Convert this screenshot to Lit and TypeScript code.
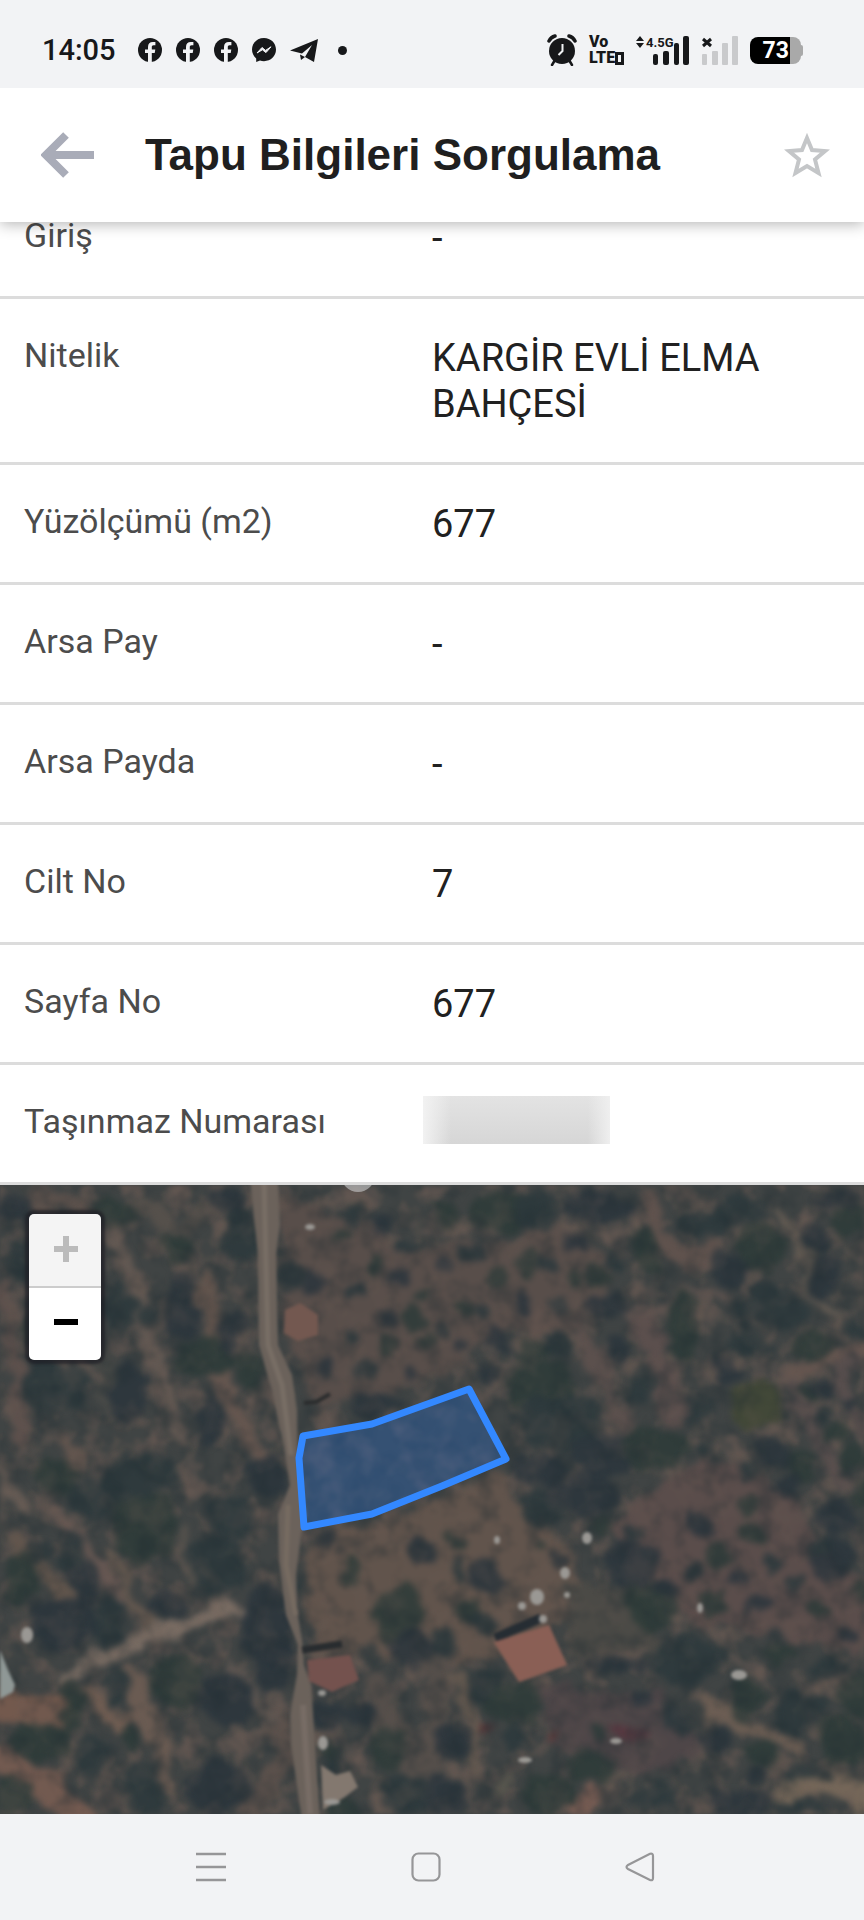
import { LitElement, html, svg, css } from "lit";
import { customElement, property } from "lit/decorators.js";

type Blob = [number, number, number, number];
type Patch = { d: string; fill: string };
type Strip = { d: string; w: number; c: string };

const SOIL: Patch[] = [
  { d: "M632 320L700 275L745 280L770 300L800 315L815 350L864 400V475L790 455L700 440L640 400L610 350Z", fill: "#5a4d4b" },
  { d: "M315 345L375 335L500 290L530 330L570 360L590 420L540 450L460 480L320 470L300 400Z", fill: "#61544c" },
  { d: "M280 5L350 30L400 60L480 60L560 40L610 70L600 130L520 140L440 190L320 225L285 140Z", fill: "#584e4a" },
  { d: "M560 400L640 400L660 460L570 470Z", fill: "#4b4a46" },
  { d: "M545 500L670 510L700 570L640 590L550 560Z", fill: "#4e4648" },
];

const STRIPS: Strip[] = [
  { d: "M117 55L133 95L147 145L163 195L180 255", w: 15, c: "#625852" },
  { d: "M207 95L217 152", w: 20, c: "#60534c" },
  { d: "M220 195L240 240L262 272", w: 15, c: "#65564f" },
  { d: "M5 105L18 200L22 255", w: 15, c: "#5c504c" },
  { d: "M0 285L23 325", w: 10, c: "#665b54" },
  { d: "M40 14L83 22", w: 18, c: "#5a504b" },
  { d: "M143 20L180 48L200 30", w: 16, c: "#55504b" },
  { d: "M60 258L76 270L74 285", w: 11, c: "#62554e" },
  { d: "M100 160L110 230", w: 9, c: "#4a4b48" },
  { d: "M649 12L665 55L685 78L714 65", w: 17, c: "#5f524d" },
  { d: "M639 128L655 162L665 195L679 232", w: 22, c: "#5b4f4d" },
  { d: "M582 142L605 195L629 250", w: 14, c: "#5b504d" },
  { d: "M515 138L572 138", w: 18, c: "#5f524d" },
  { d: "M611 122L659 125L685 108L732 118", w: 9, c: "#5e534f" },
  { d: "M779 25L802 62L809 105L835 135", w: 9, c: "#625a52" },
  { d: "M799 188L832 172L864 162", w: 14, c: "#64554f" },
  { d: "M795 202L809 242L845 295", w: 13, c: "#574e4d" },
  { d: "M850 175L840 205L864 240", w: 14, c: "#574e4d" },
  { d: "M0 522L60 528", w: 26, c: "#73594d" },
  { d: "M0 575L33 592L80 632", w: 26, c: "#735a50" },
  { d: "M63 500L95 515L115 540L140 532", w: 14, c: "#705d52" },
  { d: "M133 488L143 522L160 555L167 602", w: 17, c: "#6a5b52" },
  { d: "M57 325L87 365L120 412", w: 12, c: "#665752" },
  { d: "M113 372L130 400L147 440", w: 13, c: "#64584f" },
  { d: "M13 355L40 382L77 422", w: 17, c: "#61554c" },
  { d: "M230 482L250 498L267 528", w: 10, c: "#615853" },
  { d: "M190 345L188 400", w: 9, c: "#54514c" },
  { d: "M250 625L292 570L280 540", w: 22, c: "#5a504b" },
  { d: "M375 500L395 560L430 600L440 480", w: 26, c: "#544e4a" },
  { d: "M705 522L735 535L795 562", w: 16, c: "#6b5d53" },
  { d: "M792 602L830 594L864 612", w: 28, c: "#756759" },
  { d: "M574 622L594 612", w: 18, c: "#7b5e54" },
  { d: "M459 495L470 535L475 582", w: 15, c: "#61574e" },
  { d: "M510 590L500 610", w: 12, c: "#55554d" },
  { d: "M63 492L100 475L150 452L200 435L222 424L242 428", w: 14, c: "#786b62" },
];

const TREES: Blob[] = [
  [117, 122, 20, 25], [180, 122, 20, 32], [177, 65, 16, 14], [240, 50, 17, 28], [230, 145, 15, 20],
  [205, 172, 30, 20], [55, 200, 36, 28], [127, 205, 20, 32], [247, 185, 14, 24], [140, 290, 40, 24],
  [266, 288, 20, 20], [55, 290, 20, 18], [93, 312, 26, 22], [15, 22, 18, 14], [110, 25, 22, 16],
  [35, 75, 30, 26], [210, 235, 12, 26], [40, 140, 18, 24], [147, 130, 8, 9], [225, 15, 22, 12],
  [143, 342, 34, 32], [217, 382, 28, 30], [267, 440, 26, 40], [173, 495, 27, 27], [117, 502, 14, 20],
  [227, 515, 28, 30], [40, 555, 34, 18], [110, 438, 20, 24], [63, 438, 36, 28], [13, 608, 20, 18],
  [143, 605, 20, 26], [217, 600, 34, 28], [387, 562, 20, 20], [407, 608, 27, 22], [330, 528, 19, 15],
  [20, 395, 15, 26], [70, 365, 13, 20], [167, 422, 22, 12], [130, 555, 14, 12], [230, 330, 24, 22],
  [85, 400, 14, 20], [70, 520, 12, 26], [90, 575, 18, 22], [275, 480, 18, 26], [345, 628, 20, 12],
  [38, 370, 10, 9], [362, 530, 16, 14], [328, 562, 8, 7], [330, 578, 8, 9],
  [326, 353, 15, 9], [353, 385, 9, 19], [301, 402, 7, 12], [420, 365, 12, 14], [397, 428, 26, 27],
  [371, 468, 12, 14], [412, 462, 20, 18], [452, 355, 9, 8], [459, 385, 6, 10], [485, 392, 17, 20],
  [469, 428, 10, 11], [442, 458, 13, 17], [559, 372, 8, 7], [539, 362, 6, 6], [484, 435, 14, 10],
  [628, 378, 26, 26], [652, 422, 26, 26], [682, 475, 42, 24], [618, 482, 30, 10], [515, 515, 30, 22],
  [482, 498, 16, 16], [452, 556, 19, 19], [548, 608, 26, 20], [799, 528, 26, 24], [832, 375, 22, 24],
  [590, 580, 26, 18], [545, 325, 24, 18], [585, 310, 36, 22], [744, 512, 16, 20], [682, 530, 20, 18],
  [715, 555, 20, 14], [762, 570, 15, 12], [808, 585, 22, 8], [740, 615, 30, 14], [842, 555, 26, 24],
  [655, 612, 24, 14], [445, 612, 20, 20], [855, 510, 22, 18], [800, 620, 28, 8], [752, 590, 10, 8],
  [600, 545, 10, 7], [515, 548, 10, 18], [640, 512, 12, 8], [780, 465, 14, 12], [830, 480, 22, 8],
  [699, 340, 14, 13], [752, 348, 11, 12], [635, 345, 11, 10], [652, 372, 9, 8], [717, 367, 13, 12],
  [692, 385, 11, 11], [736, 392, 13, 11], [716, 416, 14, 14], [792, 395, 10, 10], [758, 419, 11, 11],
  [816, 425, 12, 10], [771, 377, 8, 8], [846, 448, 9, 10], [746, 320, 12, 10], [819, 362, 10, 10],
  [836, 332, 18, 18], [604, 342, 10, 10], [776, 450, 12, 7], [664, 402, 10, 8], [857, 408, 10, 10],
  [356, 108, 10, 9], [388, 130, 10, 11], [412, 132, 10, 14], [366, 187, 11, 10], [407, 188, 8, 8],
  [343, 50, 9, 8], [330, 26, 9, 8], [327, 182, 9, 12], [393, 158, 9, 10], [290, 90, 12, 16],
  [313, 95, 11, 14], [425, 110, 9, 8], [352, 30, 10, 8], [380, 40, 11, 11], [374, 80, 9, 10],
  [405, 62, 10, 9], [400, 90, 10, 8], [425, 160, 8, 9], [350, 150, 8, 8], [375, 218, 26, 12],
  [445, 28, 10, 12], [472, 68, 10, 8], [442, 82, 12, 10], [528, 78, 14, 12], [557, 115, 11, 9],
  [525, 118, 11, 10], [595, 90, 11, 11], [615, 75, 11, 11], [495, 152, 12, 12], [532, 162, 16, 16],
  [558, 160, 14, 14], [489, 186, 12, 9], [462, 120, 10, 10], [440, 145, 10, 9], [460, 160, 9, 9],
  [495, 95, 10, 10], [550, 80, 9, 9], [575, 60, 11, 9], [570, 92, 9, 9], [480, 125, 8, 8],
  [605, 122, 20, 14], [682, 140, 16, 32], [640, 200, 12, 24], [615, 165, 12, 16], [540, 200, 34, 24],
  [560, 235, 44, 28], [605, 270, 34, 24], [655, 262, 34, 22], [697, 226, 16, 16], [540, 285, 26, 18],
  [500, 25, 34, 20], [540, 25, 26, 20], [600, 20, 34, 16], [645, 65, 14, 26], [700, 38, 26, 14],
  [727, 85, 20, 18], [760, 60, 26, 24], [770, 120, 34, 22], [825, 90, 18, 22], [812, 160, 20, 14],
  [740, 25, 26, 16], [815, 50, 12, 14], [850, 30, 16, 20], [852, 145, 14, 10], [835, 15, 22, 10],
  [807, 206, 11, 9], [820, 230, 11, 9], [772, 265, 18, 14], [800, 280, 18, 18], [750, 285, 10, 9],
  [850, 218, 10, 8], [835, 250, 14, 10], [745, 155, 16, 14], [725, 185, 16, 14], [855, 270, 12, 12],
  [760, 165, 14, 8], [785, 300, 12, 12], [861, 310, 10, 10], [700, 262, 9, 9], [820, 202, 12, 9],
];

const BRIGHT: Blob[] = [
  [587, 353, 5, 6], [565, 388, 5, 6], [537, 412, 7, 8], [522, 421, 4, 4], [567, 410, 3, 3],
  [739, 490, 8, 5], [616, 556, 6, 3], [27, 450, 6, 8], [323, 558, 5, 7], [543, 434, 4, 4],
  [497, 355, 3, 4], [322, 508, 4, 3], [700, 423, 3, 5], [310, 42, 5, 3], [525, 575, 7, 3],
  [332, 617, 8, 3],
];

const ROWS: [string, string | null][] = [
  ["Giriş", "-"],
  ["Nitelik", "KARGİR EVLİ ELMA BAHÇESİ"],
  ["Yüzölçümü (m2)", "677"],
  ["Arsa Pay", "-"],
  ["Arsa Payda", "-"],
  ["Cilt No", "7"],
  ["Sayfa No", "677"],
  ["Taşınmaz Numarası", null],
];

@customElement("status-bar")
export class StatusBar extends LitElement {
  static styles = css`
    :host { display: block; position: relative; z-index: 3; background: #f2f3f5; color: #17181a; font-family: Roboto, sans-serif; }
    .bar { display: flex; align-items: center; justify-content: space-between; height: 88px; padding: 12px 61px 0 42px; box-sizing: border-box; }
    .side { display: flex; align-items: center; }
    .time { font-size: 29px; font-weight: 500; line-height: 32px; margin-right: 22px; }
    .apps { display: flex; align-items: center; gap: 14px; }
    svg { display: block; }
    .dot { width: 9px; height: 9px; border-radius: 50%; background: #17181a; margin-left: 6px; }
    .system { gap: 12px; }
    .volte { display: flex; flex-direction: column; width: 35px; font-size: 16px; font-weight: 900; line-height: 16px; }
    .lte { display: flex; align-items: center; }
    .slot { width: 3px; height: 7px; border: 3px solid #17181a; }
    .net { font: 700 13px Roboto, sans-serif; }
    .battery { display: flex; align-items: center; }
    .cell { width: 51px; height: 27px; border-radius: 8px; line-height: 28px; font-size: 23px; font-weight: 700; color: #fff; text-align: right; padding-right: 12px; box-sizing: border-box; background: linear-gradient(90deg, #000 40px, #a9a9a9 40px); }
    .tip { width: 2px; height: 11px; background: #a9a9a9; border-radius: 0 2px 2px 0; }
  `;

  private facebook() {
    return html`<svg width="24" height="24" viewBox="0 0 24 24" aria-hidden="true">
      <circle cx="12" cy="12" r="12" fill="#17181a" />
      <path d="M10 24V15H7V11.5H10V9C10 5.8 11.8 4 14.8 4H17.4V7.3H15.6C14.3 7.3 13.8 8 13.8 9.2V11.5H17.3L16.7 15H13.8V24Z" fill="#f2f3f5" />
    </svg>`;
  }

  render() {
    return html`<div class="bar">
      <div class="side">
        <span class="time">14:05</span>
        <div class="apps">
          ${this.facebook()}${this.facebook()}${this.facebook()}
          <svg width="24" height="24" viewBox="0 0 24 24" aria-hidden="true">
            <path d="M12 0C5.2 0 0 5 0 11.6C0 15.2 1.6 18.3 4.2 20.4V24L8 22.6C9.2 23 10.6 23.2 12 23.2C18.8 23.2 24 18.2 24 11.6S18.8 0 12 0Z" fill="#17181a" />
            <path d="M5 15L10 9.5L13.6 12.4L19 8.8L14 14.6L10.4 11.8Z" fill="#f2f3f5" stroke="#f2f3f5" stroke-width="1" stroke-linejoin="round" />
          </svg>
          <svg width="28" height="24" viewBox="0 0 28 24" aria-hidden="true">
            <path d="M28 1L24 24L15 19L22 7L12 15.500L0 12.500Z" fill="#17181a" /><path d="M10 16.500L15 19L11 22Z" fill="#17181a" />
          </svg>
          <span class="dot"></span>
        </div>
      </div>
      <div class="side system">
        <svg width="30" height="32" viewBox="0 0 30 32" aria-hidden="true">
          <g fill="none" stroke="#17181a" stroke-linecap="round">
            <path d="M2 7Q4 3 8 2M22 2Q26 3 28 7" stroke-width="3.500" />
            <path d="M8 26L5 31M22 26L25 31" stroke-width="2.500" />
          </g>
          <circle cx="15" cy="17" r="13" fill="#17181a" />
          <path d="M15.500 10V17L11.500 21" fill="none" stroke="#f2f3f5" stroke-width="2" />
        </svg>
        <div class="volte"><span>Vo</span><span class="lte">LTE<i class="slot"></i></span></div>
        <svg width="54" height="30" viewBox="0 0 54 30" aria-label="4.5G">
          <path d="M0 6L4 1L8 6ZM0 8L4 13L8 8Z" fill="#17181a" />
          <text class="net" x="10" y="12" fill="#17181a">4.5G</text>
          <g fill="#17181a"><rect x="17" y="19" width="5" height="11" rx="2" /><rect x="27" y="16" width="6" height="14" rx="2" /><rect x="38" y="8" width="5" height="22" rx="2" /><rect x="47" y="1" width="6" height="29" rx="2" /></g>
        </svg>
        <svg width="36" height="30" viewBox="0 0 36 30" aria-hidden="true">
          <path d="M1 4L9 11M9 4L1 11" stroke="#17181a" stroke-width="3" />
          <g fill="#c9cacc"><rect x="0" y="19" width="5" height="11" rx="1" /><rect x="10" y="16" width="6" height="14" rx="1" /><rect x="20" y="8" width="6" height="22" rx="1" /><rect x="30" y="1" width="6" height="29" rx="1" /></g>
        </svg>
        <div class="battery"><span class="cell">73</span><span class="tip"></span></div>
      </div>
    </div>`;
  }
}

@customElement("parcel-map")
export class ParcelMap extends LitElement {
  static styles = css`
    :host { display: grid; background: #384042; overflow: hidden; }
    .scene { width: 100%; height: 100%; min-height: 0; display: block; }
    .zoom { grid-area: 1 / 1; z-index: 1; align-self: start; justify-self: start; margin: 29px; display: flex; flex-direction: column; width: 72px; border-radius: 5px; overflow: hidden; box-shadow: 0 0 3px 4px rgba(28, 28, 36, 0.7); }
    .btn { display: grid; place-items: center; height: 72px; padding: 0 0 0 2px; border: 0; background: #fff; color: #000; }
    .btn:disabled { background: #f4f4f4; color: #bbb; }
    .in { height: 74px; padding-bottom: 3px; border-bottom: 2px solid #ccc; }
    .frame { display: grid; min-height: 0; contain: size; grid-area: 1 / 1; }
  `;

  render() {
    return html`
      <div class="frame">
        <svg class="scene" viewBox="0 0 864 629" preserveAspectRatio="xMidYMid slice" role="img" aria-label="Parsel haritası">
          <defs>
            <filter id="soft" x="-5%" y="-5%" width="110%" height="110%" color-interpolation-filters="sRGB">
              <feTurbulence type="fractalNoise" baseFrequency="0.04" numOctaves="3" seed="8" result="n" />
              <feDisplacementMap in="SourceGraphic" in2="n" scale="26" xChannelSelector="R" yChannelSelector="G" />
              <feGaussianBlur stdDeviation="3" />
            </filter>
            <filter id="edge" x="-10%" y="-10%" width="120%" height="120%" color-interpolation-filters="sRGB"><feGaussianBlur stdDeviation="1.7" /></filter>
            <filter id="grain" x="0" y="0" width="100%" height="100%" color-interpolation-filters="sRGB">
              <feTurbulence type="fractalNoise" baseFrequency="0.035" numOctaves="3" seed="21" />
              <feColorMatrix values="0 0 0 0 0.42  0 0 0 0 0.36  0 0 0 0 0.33  3 0 0 0 -1.3" />
              <feGaussianBlur stdDeviation="1.5" />
            </filter>
            <filter id="shade" x="0" y="0" width="100%" height="100%" color-interpolation-filters="sRGB">
              <feTurbulence type="fractalNoise" baseFrequency="0.04" numOctaves="3" seed="5" />
              <feColorMatrix values="0 0 0 0 0.12  0 0 0 0 0.17  0 0 0 0 0.19  0 3 0 0 -1.35" />
              <feGaussianBlur stdDeviation="1.5" />
            </filter>
          </defs>
          <rect width="864" height="629" fill="#404444" />
          <rect width="864" height="629" filter="url(#grain)" opacity="0.7" />
          <g filter="url(#soft)">
            ${SOIL.map((p) => svg`<path d=${p.d} fill=${p.fill} />`)}
            ${STRIPS.map((s) => svg`<path d=${s.d} fill="none" stroke=${s.c} stroke-width=${s.w} stroke-linejoin="round" stroke-linecap="round" />`)}
            <ellipse cx="759" cy="222" rx="26" ry="26" fill="#424838" />
            ${TREES.map((t, i) => svg`<ellipse cx=${t[0] + 1} cy=${t[1] + 1} rx=${t[2]} ry=${t[3]} fill=${["#2c393c", "#2b353c", "#2e3b39"][i % 3]} opacity="0.88" />`)}
            <ellipse cx="632" cy="548" rx="18" ry="7" fill="#54363f" />
            <circle cx="484" cy="543" r="6" fill="#5a3436" /><circle cx="555" cy="552" r="5" fill="#5a3436" />
          </g>
          <rect width="864" height="629" filter="url(#grain)" opacity="0.2" />
          <rect width="864" height="629" filter="url(#shade)" opacity="0.35" />
          <g filter="url(#edge)" stroke-linejoin="round">
            <path d="M250 -5H278L280 40L276 70L278 160L292 190L297 225L298 285L307 330L301 350L296 390L297 425L302 455L304 480L311 500L320 635H302L291 560L290 530L297 490L298 460L286 430L279 375L278 330L290 300L284 262L272 205L259 160L258 70Z" fill="#6b625b" />
            <path d="M264 -5L266 80L268 160L282 200L291 270" fill="none" stroke="#786e65" stroke-width="5" />
            <path d="M288 320L286 380L296 430" fill="none" stroke="#766b61" stroke-width="5" />
            <path d="M303 520L310 629" stroke="#776c65" stroke-width="6" />
            <path d="M285 125L300 118L318 130L318 150L298 156L284 148Z" fill="#735850" />
            <path d="M304 218L316 217L330 209" fill="none" stroke="#2a2c2d" stroke-width="4" />
            <path d="M302 465L342 459" stroke="#282c2f" stroke-width="7" />
            <path d="M307 475L350 470L359 495L332 507L309 496Z" fill="#74524e" />
            <path d="M495 453L541 433" stroke="#262d33" stroke-width="9" />
            <path d="M494 457L549 440L567 480L519 497Z" fill="#87604f" />
            <path d="M494 457L549 440L567 480L519 497Z" fill="#8c5f59" fill-opacity="0.7" />
            <path d="M0 465L8 485L15 500L13 507L0 514Z" fill="#8f9896" />
            <path d="M321 580L336 590L350 586L358 602L345 612L323 625Z" fill="#83786f" />
            ${BRIGHT.map((b) => svg`<ellipse cx=${b[0]} cy=${b[1]} rx=${b[2]} ry=${b[3]} fill="#9a9894" />`)}
          </g>
          <path d="M303 251L372 239L469 204L506 274L442 301L372 329L304 342L299 273Z" fill="#2763b5" fill-opacity="0.42" stroke="#3388ff" stroke-width="7" stroke-linejoin="round" />
          <circle cx="358" cy="-10" r="17" fill="#d5d7d8" fill-opacity="0.55" />
        </svg>
      </div>
      <div class="zoom">
        <button class="btn in" disabled aria-label="Yakınlaştır">
          <svg width="26" height="26" viewBox="0 0 26 26"><path d="M13 0V26M1 13H25" stroke="currentColor" stroke-width="6" /></svg>
        </button>
        <button class="btn" aria-label="Uzaklaştır">
          <svg width="26" height="26" viewBox="0 0 26 26"><path d="M1 11H25" stroke="currentColor" stroke-width="6" /></svg>
        </button>
      </div>`;
  }
}

@customElement("detail-row")
export class DetailRow extends LitElement {
  @property() label = "";
  @property({ attribute: false }) value: string | null = "";
  static styles = css`
    :host { display: block; border-bottom: 3px solid #dcdcdc; background: #fff; }
    .row { display: grid; grid-template-columns: 1fr 1fr; margin: 0; padding: 36px 0 35px; }
    .label { padding-left: 24px; font-size: 34px; line-height: 40px; color: #4c4c4c; }
    .value { margin: 0; padding-right: 48px; font-size: 38px; line-height: 46px; color: #212121; }
    .hidden { width: 187px; height: 48px; margin: -5px 0 3px -9px; background: linear-gradient(90deg, #f2f2f2 0, rgba(242, 242, 242, 0) 15%, rgba(242, 242, 242, 0) 88%, #efefef 100%), linear-gradient(180deg, #e3e3e3, #d6d6d6); }
  `;

  render() {
    return html`<dl class="row">
      <dt class="label">${this.label}</dt>
      <dd class="value">${this.value === null ? html`<div class="hidden"></div>` : this.value}</dd>
    </dl>`;
  }
}

@customElement("app-root")
export class AppRoot extends LitElement {
  static styles = css`
    :host { display: flex; flex-direction: column; min-height: 100vh; background: #fff; font-family: Roboto, sans-serif; }
    .header { position: relative; z-index: 2; display: flex; align-items: center; height: 134px; padding: 0 34px 0 41px; box-sizing: border-box; background: #fff; box-shadow: 0 2px 14px rgba(0, 0, 0, 0.3); }
    .icon { display: block; padding: 0; border: 0; background: none; }
    .icon svg { display: block; }
    .title { flex: 1; margin: 0 0 0 50px; font-family: "Liberation Sans", sans-serif; font-size: 44px; font-weight: 700; line-height: 52px; color: #1f1f1f; }
    .rows { overflow: hidden; }
    .list { margin-top: -43px; }
    .map { flex: 1; min-height: 400px; }
    .nav { display: grid; grid-template-columns: repeat(3, 1fr); place-items: center; height: 106px; padding: 0 13.500% 0 12%; box-sizing: border-box; background: #f2f3f5; }
  `;

  render() {
    return html`
      <status-bar></status-bar>
      <header class="header">
        <button class="icon" aria-label="Geri">
          <svg width="54" height="46" viewBox="0 0 54 46"><path d="M25 3L5 23L25 43M5 23H53" fill="none" stroke="#a9acb8" stroke-width="8" /></svg>
        </button>
        <h1 class="title">Tapu Bilgileri Sorgulama</h1>
        <button class="icon" aria-label="Favorilere ekle">
          <svg width="46" height="46" viewBox="0 0 46 46"><path d="M23 6L28 18L41 19L31 27.500L34.500 41L23 34L11.500 41L15 27.500L5 19L18 18Z" fill="none" stroke="#c4c6c8" stroke-width="4" /></svg>
        </button>
      </header>
      <main class="rows">
        <div class="list">${ROWS.map(([l, v]) => html`<detail-row .label=${l} .value=${v}></detail-row>`)}</div>
      </main>
      <parcel-map class="map"></parcel-map>
      <nav class="nav">
        <button class="icon" aria-label="Son uygulamalar">
          <svg width="30" height="30" viewBox="0 0 30 30"><path d="M0 2H30M0 15H30M0 28H30" stroke="#969698" stroke-width="2.500" /></svg>
        </button>
        <button class="icon" aria-label="Ana ekran">
          <svg width="30" height="30" viewBox="0 0 30 30"><rect x="1.500" y="1.500" width="27" height="27" rx="6" fill="none" stroke="#969698" stroke-width="2.200" /></svg>
        </button>
        <button class="icon" aria-label="Geri dön">
          <svg width="30" height="30" viewBox="0 0 30 30"><path d="M25 1.800Q28 1 28 4V26Q28 29 25 28L3 17Q0 15 3 13Z" fill="none" stroke="#969698" stroke-width="2.200" /></svg>
        </button>
      </nav>`;
  }
}
